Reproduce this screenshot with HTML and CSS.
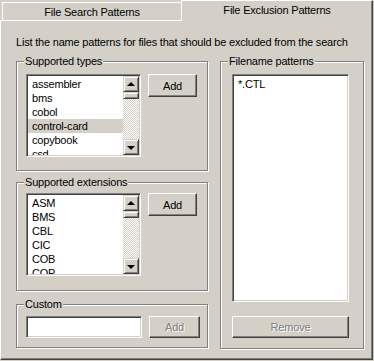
FILE: index.html
```html
<!DOCTYPE html>
<html lang="en">
<head>
    <meta charset="UTF-8">
    <title>File Exclusion Patterns</title>
    <link rel="stylesheet" href="styles.css">
</head>
<body>
    <!-- Tab strip -->
    <div class="tabs">
        <div class="tab">File Search Patterns</div>
        <div class="tab active">File Exclusion Patterns</div>
    </div>

    <!-- Tab page -->
    <div class="panel">
        <p class="hint">List the name patterns for files that should be excluded from the search</p>

        <div class="columns">
            <div class="left-col">
                <!-- Supported types -->
                <div class="group g-types">
                    <span class="group-label">Supported types</span>
                    <div class="row">
                        <div class="listbox list-small">
                            <ul class="items">
                                <li>assembler</li>
                                <li>bms</li>
                                <li>cobol</li>
                                <li class="selected">control-card</li>
                                <li>copybook</li>
                                <li>csd</li>
                            </ul>
                            <div class="scrollbar">
                                <div class="sb-btn"><span class="arrow-up"></span></div>
                                <div class="sb-thumb"></div>
                                <div class="sb-track"></div>
                                <div class="sb-btn"><span class="arrow-down"></span></div>
                            </div>
                        </div>
                        <button class="btn">Add</button>
                    </div>
                </div>

                <!-- Supported extensions -->
                <div class="group g-ext">
                    <span class="group-label">Supported extensions</span>
                    <div class="row">
                        <div class="listbox list-small">
                            <ul class="items">
                                <li>ASM</li>
                                <li>BMS</li>
                                <li>CBL</li>
                                <li>CIC</li>
                                <li>COB</li>
                                <li>COP</li>
                            </ul>
                            <div class="scrollbar">
                                <div class="sb-btn"><span class="arrow-up"></span></div>
                                <div class="sb-thumb"></div>
                                <div class="sb-track"></div>
                                <div class="sb-btn"><span class="arrow-down"></span></div>
                            </div>
                        </div>
                        <button class="btn">Add</button>
                    </div>
                </div>

                <!-- Custom -->
                <div class="group g-custom">
                    <span class="group-label">Custom</span>
                    <div class="row">
                        <input class="textbox" type="text">
                        <button class="btn btn-custom" disabled>Add</button>
                    </div>
                </div>
            </div>

            <!-- Filename patterns -->
            <div class="group g-patterns">
                <span class="group-label">Filename patterns</span>
                <div class="listbox list-big">
                    <ul class="items">
                        <li>*.CTL</li>
                    </ul>
                </div>
                <button class="btn btn-wide" disabled>Remove</button>
            </div>
        </div>
    </div>
</body>
</html>
```

FILE: styles.css
```css
/* Classic dialog look: grey face, 8pt sans text */
body {
    margin: 0;
    width: 374px;
    height: 361px;
    background: #d4d0c8;
    font-family: "Liberation Sans", Arial, sans-serif;
    font-size: 11px;
    letter-spacing: -0.2px;
    color: #000;
    overflow: hidden;
}

/* Tab strip */
.tabs {
    display: flex;
    align-items: flex-end;
    height: 20px;
}

.tab {
    box-sizing: border-box;
    height: 18px;
    width: 179px;
    margin-left: 2px;
    border-top: 1px solid #fff;
    border-left: 1px solid #fff;
    text-align: center;
    line-height: 19px;
}

.tab.active {
    position: relative;
    z-index: 1;
    height: 21px;
    width: 192px;
    margin-left: 0;
    margin-bottom: -1px;
    border-right: 1px solid #404040;
    box-shadow: inset -1px 0 #808080;
    background: #d4d0c8;
    line-height: 18px;
}

/* Tab page body */
.panel {
    box-sizing: border-box;
    width: 373px;
    height: 340px;
    border-top: 1px solid #fff;
    border-left: 1px solid #fff;
    border-right: 1px solid #404040;
    border-bottom: 1px solid #404040;
    box-shadow: inset -1px -1px #808080;
    padding: 0 0 0 15px;
}

.hint {
    margin: 15px 0 0 0;
    line-height: 13px;
}

.columns {
    display: flex;
    gap: 12px;
    margin-top: 12px;
}

.left-col {
    display: flex;
    flex-direction: column;
    width: 192px;
}

/* Etched group box */
.group {
    position: relative;
    box-sizing: border-box;
    border: 1px solid #808080;
    box-shadow: inset 1px 1px #fff, 1px 1px #fff;
    padding: 12px 0 0 9px;
}

.group-label {
    position: absolute;
    top: -7px;
    left: 7px;
    padding: 0 1px;
    background: #d4d0c8;
    line-height: 13px;
}

.g-types { height: 110px; }
.g-ext { height: 109px; margin-top: 11px; padding-top: 10px; }
.g-custom { height: 44px; margin-top: 13px; padding-top: 11px; }
.g-patterns { width: 144px; height: 288px; padding: 12px 0 0 11px; }

.row {
    display: flex;
    align-items: flex-start;
    gap: 7px;
}

/* Sunken list box */
.listbox {
    box-sizing: border-box;
    display: flex;
    background: #fff;
    border: 1px solid;
    border-color: #808080 #fff #fff #808080;
    box-shadow: inset 1px 1px #404040, inset -1px -1px #d4d0c8;
    padding: 1px;
    overflow: hidden;
}

.list-small { width: 115px; height: 83px; }
.list-big { width: 117px; height: 228px; }

.items {
    flex: 1;
    list-style: none;
    margin: 0;
    padding: 1px 0 0 0;
    overflow: hidden;
}

.items li {
    height: 14px;
    line-height: 14px;
    padding-left: 4px;
    white-space: nowrap;
}

.items li.selected {
    background: #d4d0c8;
}

/* Scroll bar */
.scrollbar {
    display: flex;
    flex-direction: column;
    width: 16px;
}

.sb-btn,
.sb-thumb {
    box-sizing: border-box;
    background: #d4d0c8;
    border: 1px solid;
    border-color: #d4d0c8 #404040 #404040 #d4d0c8;
    box-shadow: inset 1px 1px #fff, inset -1px -1px #808080;
}

.sb-btn {
    height: 16px;
    display: flex;
    align-items: center;
    justify-content: center;
}

.sb-thumb { height: 7px; }

.sb-track {
    flex: 1;
    background: repeating-conic-gradient(#fff 0 25%, #d4d0c8 0 50%) 0 0 / 2px 2px;
}

.arrow-up,
.arrow-down {
    width: 0;
    height: 0;
    border-left: 4px solid transparent;
    border-right: 4px solid transparent;
}

.arrow-up { border-bottom: 4px solid #000; margin-top: -1px; }
.arrow-down { border-top: 4px solid #000; margin-top: 1px; }

/* Push buttons */
.btn {
    box-sizing: border-box;
    width: 49px;
    height: 23px;
    font: inherit;
    letter-spacing: inherit;
    color: #000;
    background: #d4d0c8;
    border: 1px solid;
    border-color: #fff #404040 #404040 #fff;
    box-shadow: inset -1px -1px #808080;
    padding: 0;
}

.btn:disabled {
    color: #808080;
    text-shadow: 1px 1px #fff;
}

.btn-custom { width: 51px; height: 22px; }

.btn-wide {
    display: block;
    width: 117px;
    height: 22px;
    margin-top: 14px;
}

/* Sunken edit box */
.textbox {
    box-sizing: border-box;
    width: 116px;
    height: 22px;
    margin: 0;
    background: #fff;
    border: 1px solid;
    border-color: #808080 #fff #fff #808080;
    box-shadow: inset 1px 1px #404040, inset -1px -1px #d4d0c8;
    outline: none;
}
```
